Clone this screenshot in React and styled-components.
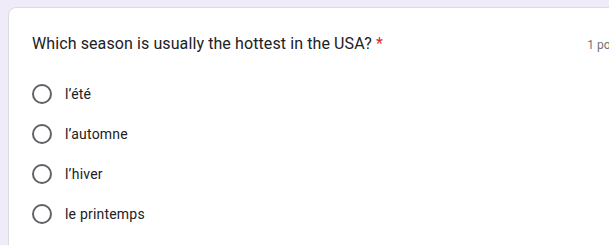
import React from "react";
import styled, { createGlobalStyle } from "styled-components";

const GlobalStyle = createGlobalStyle`
  html, body {
    margin: 0;
    padding: 0;
    background: #f0ebf8;
    overflow: hidden;
    font-family: Roboto, "Liberation Sans", Arial, sans-serif;
  }
  body {
    padding: 7px 0 0 8px;
  }
`;

const Card = styled.div`
  width: 641px;
  min-height: 260px;
  box-sizing: border-box;
  background: #fff;
  border: 1px solid #dadce0;
  border-radius: 8px;
  padding: 24px 24px 24px 23px;
`;

const Header = styled.div`
  display: flex;
  justify-content: space-between;
  align-items: flex-start;
`;

const Question = styled.div`
  font-size: 16px;
  line-height: 24px;
  color: #202124;
  letter-spacing: 0.1px;
`;

const Required = styled.span`
  color: #d93025;
  margin-left: 4px;
`;

const Points = styled.div`
  font-size: 12px;
  line-height: 24px;
  color: #70757a;
  padding-top: 1px;
  white-space: nowrap;
`;

const Options = styled.div`
  display: flex;
  flex-direction: column;
  margin-top: 17px;
`;

const Option = styled.label`
  display: flex;
  align-items: center;
  height: 40px;
  gap: 13px;
  cursor: pointer;
`;

const Radio = styled.span`
  width: 20px;
  height: 20px;
  box-sizing: border-box;
  border: 2px solid #5f6368;
  border-radius: 50%;
  flex-shrink: 0;
`;

const Label = styled.span`
  font-size: 14px;
  color: #202124;
  letter-spacing: 0.2px;
`;

const options = ["l’été", "l’automne", "l’hiver", "le printemps"];

export default function App() {
  return (
    <>
      <GlobalStyle />
      <Card>
        <Header>
          <Question>
            Which season is usually the hottest in the USA?
            <Required>*</Required>
          </Question>
          <Points>1 point</Points>
        </Header>
        <Options>
          {options.map((o) => (
            <Option key={o}>
              <Radio />
              <Label>{o}</Label>
            </Option>
          ))}
        </Options>
      </Card>
    </>
  );
}
